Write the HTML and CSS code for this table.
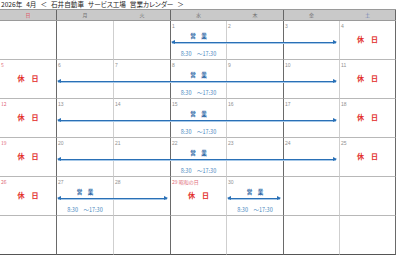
FILE: index.html
```html
<!DOCTYPE html>
<html lang="ja">
<head>
<meta charset="utf-8">
<title>営業カレンダー</title>
<link rel="stylesheet" href="styles.css">
</head>
<body>
<div class="title">2026年 4月 ＜ 石井自動車 サービス工場 営業カレンダー ＞</div>
<div class="cal">
  <div class="head">
    <div class="hc sun">日</div>
    <div class="hc">月</div>
    <div class="hc">火</div>
    <div class="hc">水</div>
    <div class="hc">木</div>
    <div class="hc">金</div>
    <div class="hc sat">土</div>
  </div>

  <div class="week">
    <div class="cell"></div>
    <div class="cell"></div>
    <div class="cell"></div>
    <div class="cell"><span class="num">1</span></div>
    <div class="cell"><span class="num">2</span></div>
    <div class="cell"><span class="num">3</span></div>
    <div class="cell"><span class="num">4</span><span class="off">休　日</span></div>
    <div class="arrow wed-fri"></div>
    <div class="biz at-wed"><span class="bl">営　業</span><span class="bt">8:30　～17:30</span></div>
  </div>

  <div class="week">
    <div class="cell"><span class="num red">5</span><span class="off">休　日</span></div>
    <div class="cell"><span class="num">6</span></div>
    <div class="cell"><span class="num">7</span></div>
    <div class="cell"><span class="num">8</span></div>
    <div class="cell"><span class="num">9</span></div>
    <div class="cell"><span class="num">10</span></div>
    <div class="cell"><span class="num">11</span><span class="off">休　日</span></div>
    <div class="arrow mon-fri"></div>
    <div class="biz at-wed"><span class="bl">営　業</span><span class="bt">8:30　～17:30</span></div>
  </div>

  <div class="week">
    <div class="cell"><span class="num red">12</span><span class="off">休　日</span></div>
    <div class="cell"><span class="num">13</span></div>
    <div class="cell"><span class="num">14</span></div>
    <div class="cell"><span class="num">15</span></div>
    <div class="cell"><span class="num">16</span></div>
    <div class="cell"><span class="num">17</span></div>
    <div class="cell"><span class="num">18</span><span class="off">休　日</span></div>
    <div class="arrow mon-fri"></div>
    <div class="biz at-wed"><span class="bl">営　業</span><span class="bt">8:30　～17:30</span></div>
  </div>

  <div class="week">
    <div class="cell"><span class="num red">19</span><span class="off">休　日</span></div>
    <div class="cell"><span class="num">20</span></div>
    <div class="cell"><span class="num">21</span></div>
    <div class="cell"><span class="num">22</span></div>
    <div class="cell"><span class="num">23</span></div>
    <div class="cell"><span class="num">24</span></div>
    <div class="cell"><span class="num">25</span><span class="off">休　日</span></div>
    <div class="arrow mon-fri"></div>
    <div class="biz at-wed"><span class="bl">営　業</span><span class="bt">8:30　～17:30</span></div>
  </div>

  <div class="week">
    <div class="cell"><span class="num red">26</span><span class="off">休　日</span></div>
    <div class="cell"><span class="num">27</span></div>
    <div class="cell"><span class="num">28</span></div>
    <div class="cell"><span class="num red">29 昭和の日</span><span class="off">休　日</span></div>
    <div class="cell"><span class="num">30</span></div>
    <div class="cell"></div>
    <div class="cell"></div>
    <div class="arrow mon-tue"></div>
    <div class="biz at-mon"><span class="bl">営　業</span><span class="bt">8:30　～17:30</span></div>
    <div class="arrow thu-only"></div>
    <div class="biz at-thu"><span class="bl">営　業</span><span class="bt">8:30　～17:30</span></div>
  </div>

  <div class="week last">
    <div class="cell"></div>
    <div class="cell"></div>
    <div class="cell"></div>
    <div class="cell"></div>
    <div class="cell"></div>
    <div class="cell"></div>
    <div class="cell"></div>
  </div>
</div>
</body>
</html>
```
FILE: styles.css
```css
html, body {
  margin: 0;
  padding: 0;
  background: #ffffff;
}

body {
  font-family: "Noto Sans CJK JP", "Liberation Sans", sans-serif;
  color: #333333;
}

.title {
  height: 9px;
  line-height: 9px;
  font-size: 6.6px;
  padding-left: 1px;
  color: #222222;
  white-space: nowrap;
  word-spacing: 2.5px;
  font-feature-settings: "palt";
}

.cal {
  width: 396px;
}

.head,
.week {
  display: grid;
  grid-template-columns: 57px 57px 57px 56px 57px 56px 56px;
}

.head {
  height: 10px;
  border-top: 1px solid #9a9a9a;
  border-bottom: 1px solid #9a9a9a;
  background: #c9c9c9;
}

.hc {
  font-size: 5px;
  line-height: 10px;
  text-align: center;
  color: #707070;
  border-right: 1px solid #c9c9c9;
}

.hc:nth-child(odd) {
  border-right-color: #666666;
}

.hc.sun {
  color: #e05a6a;
}

.hc.sat {
  color: #6a80b4;
}

.week {
  height: 39px;
  grid-template-rows: 39px;
}

.cell {
  grid-row: 1;
  display: flex;
  flex-direction: column;
  border-right: 1px solid #cfcfcf;
  border-bottom: 1px solid #b8b8b8;
}

.cell:nth-child(odd) {
  border-right-color: #6a6a6a;
}

.cell:nth-child(1) { grid-column: 1; }
.cell:nth-child(2) { grid-column: 2; }
.cell:nth-child(3) { grid-column: 3; }
.cell:nth-child(4) { grid-column: 4; }
.cell:nth-child(5) { grid-column: 5; }
.cell:nth-child(6) { grid-column: 6; }
.cell:nth-child(7) { grid-column: 7; }

.week.last .cell {
  border-bottom-color: #555555;
}

.num {
  font-family: "Liberation Sans", "Noto Sans CJK JP", sans-serif;
  font-size: 5px;
  line-height: 6px;
  height: 6px;
  padding: 2px 0 0 1px;
  color: #909090;
  white-space: nowrap;
}

.num.red {
  color: #e06a78;
  font-family: "Noto Sans CJK JP", "Liberation Sans", sans-serif;
}

.off {
  margin-top: 6px;
  font-size: 7px;
  line-height: 8px;
  text-align: center;
  color: #e2231a;
  -webkit-text-stroke: 0.25px #e2231a;
}

.arrow {
  grid-row: 1;
  align-self: start;
  position: relative;
  height: 1px;
  margin: 21px 4px 0 1px;
  background: #2a70b6;
  border-bottom: 1px solid #a6c8e8;
}

.arrow::before,
.arrow::after {
  content: "";
  position: absolute;
  top: -2px;
  border-top: 2.5px solid transparent;
  border-bottom: 2.5px solid transparent;
}

.arrow::before {
  left: -1px;
  border-right: 4px solid #2a70b6;
}

.arrow::after {
  right: -1px;
  border-left: 4px solid #2a70b6;
}

.mon-fri { grid-column: 2 / 7; }
.wed-fri { grid-column: 4 / 7; }
.mon-tue { grid-column: 2 / 4; }
.thu-only { grid-column: 5 / 6; }

.biz {
  grid-row: 1;
  display: flex;
  flex-direction: column;
  align-items: center;
  padding-top: 11px;
  padding-right: 1px;
}

.at-mon { grid-column: 2; }
.at-wed { grid-column: 4; }
.at-thu { grid-column: 5; }

.bl {
  font-size: 5.5px;
  line-height: 8px;
  color: #2764a4;
  -webkit-text-stroke: 0.2px #2764a4;
  white-space: nowrap;
}

.bt {
  margin-top: 11px;
  font-size: 5.5px;
  line-height: 6px;
  color: #4a88c0;
  white-space: nowrap;
}
```
